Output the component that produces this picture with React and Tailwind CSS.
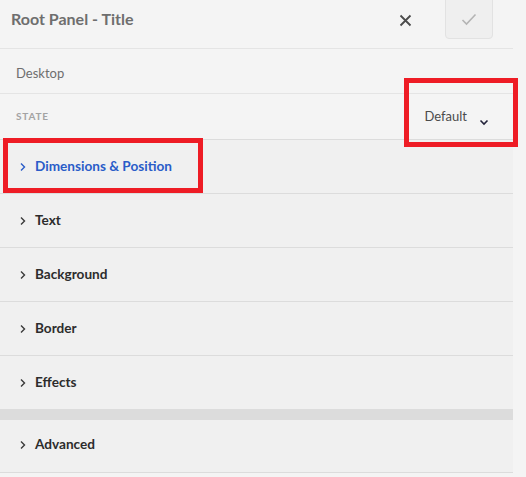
import React from 'react';

const sections = ['Dimensions & Position', 'Text', 'Background', 'Border', 'Effects'];

const Chevron = ({ className }) => (
  <svg width="8" height="10" viewBox="0 0 8 10" className={className}>
    <path d="M2 1.5 L5.5 5 L2 8.5" fill="none" stroke="currentColor" strokeWidth="1.4" />
  </svg>
);

const Row = ({ label, active, last }) => (
  <div className={`${last ? 'h-[53px] pb-[3px]' : 'h-[54px]'} flex items-center pl-[19px] border-b border-[#dcdcdc] bg-[#f0f0f0]`}>
    <Chevron className={active ? 'text-[#2a5cc8]' : 'text-[#3a3a3a]'} />
    <span className={`ml-[8px] text-[13.6px] font-bold ${active ? 'text-[#2a5cc8]' : 'text-[#2c2c2c]'}`}>
      {label}
    </span>
  </div>
);

const App = () => {
  return (
    <div
      className="relative w-[526px] h-[477px] bg-[#f4f4f4] overflow-hidden"
      style={{ fontFamily: 'Lato, "Open Sans", sans-serif' }}
    >
      <div className="w-[513px]">
        {/* Header */}
        <div className="h-[49px] flex items-start border-b border-[#e4e4e4]">
          <div className="pl-[11px] pt-[7px] text-[16px] font-bold text-[#6e6e6e]">Root Panel - Title</div>
          <div className="flex-1" />
          <button className="mt-[14px] mr-[33px] text-[#4b4b4b]">
            <svg width="13" height="13" viewBox="0 0 13 13">
              <path d="M1.5 1.5 L11.5 11.5 M11.5 1.5 L1.5 11.5" stroke="currentColor" strokeWidth="1.8" />
            </svg>
          </button>
          <div className="w-[48px] h-[40px] -mt-[1px] mr-[20px] flex items-center justify-center rounded-b-[4px] border border-[#e2e2e2] bg-[#efefef]">
            <svg width="16" height="13" viewBox="0 0 16 13">
              <path d="M1.5 7 L5.5 11 L14.5 1.5" fill="none" stroke="#b4b4b4" strokeWidth="1.6" />
            </svg>
          </div>
        </div>

        {/* Breakpoint */}
        <div className="h-[45px] flex items-center pl-[16px] pt-[5px] border-b border-[#e4e4e4] text-[13px] text-[#6e6e6e]">
          Desktop
        </div>

        {/* State */}
        <div className="h-[46px] flex items-center pl-[16px] border-b border-[#dcdcdc]">
          <span className="text-[10px] font-bold tracking-[0.08em] text-[#a3a3a3]">STATE</span>
          <div className="flex-1" />
          <span className="text-[13px] text-[#4b4b4b] mr-[12px]">Default</span>
          <svg width="10" height="7" viewBox="0 0 10 7" className="mt-[12px] mr-[24px]">
            <path d="M1.5 1.5 L5 5 L8.5 1.5" fill="none" stroke="#23233a" strokeWidth="1.6" />
          </svg>
        </div>

        {sections.map((s, i) => (
          <Row key={s} label={s} active={i === 0} />
        ))}
        <div className="h-[10px] bg-[#dcdcdc]" />
        <Row label="Advanced" last />
      </div>

      {/* annotation boxes */}
      <div className="absolute left-[404px] top-[78px] w-[114px] h-[69px] border-[5px] border-[#ee1c25]" />
      <div className="absolute left-[3px] top-[138px] w-[200px] h-[55px] border-[5px] border-[#ee1c25]" />
    </div>
  );
};

export default App;
